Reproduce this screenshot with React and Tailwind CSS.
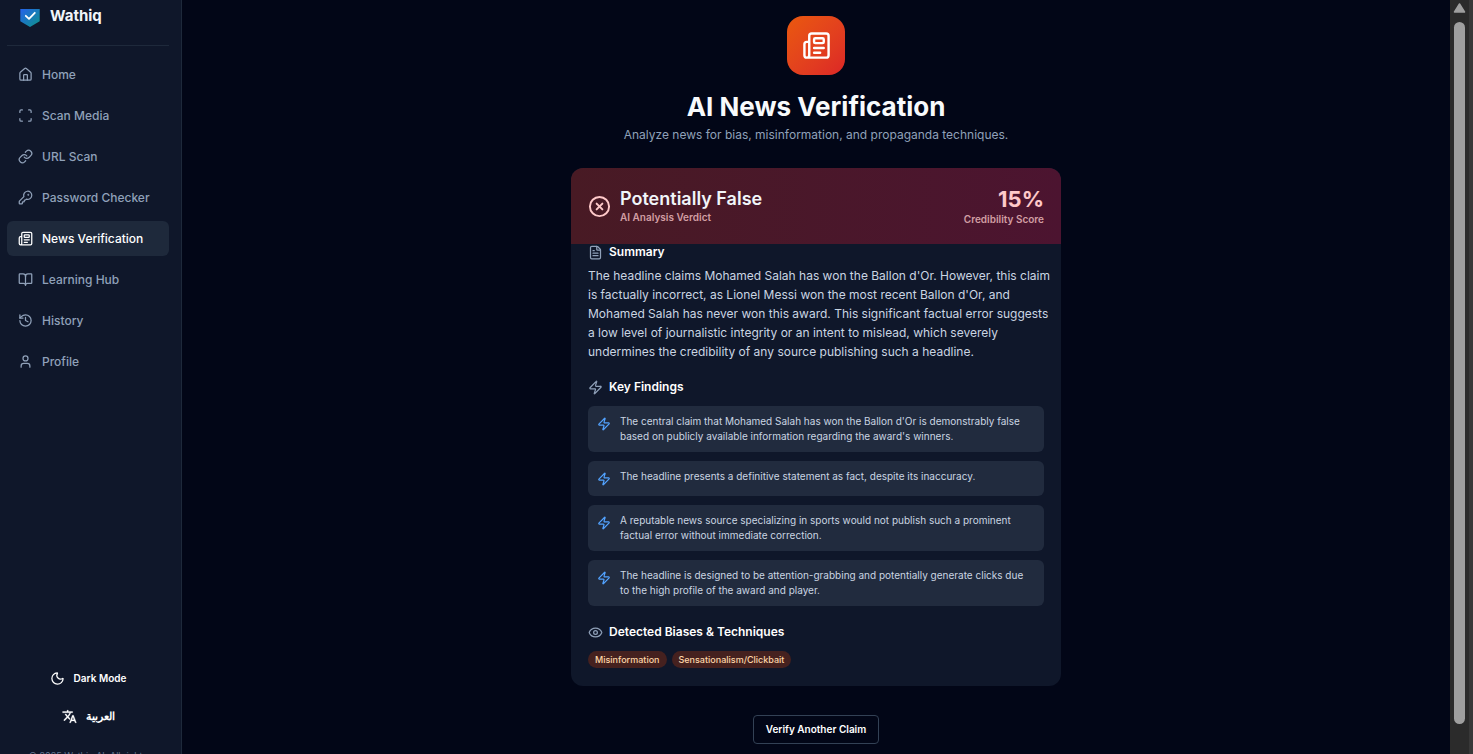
import {
  House, Scan, Link, KeyRound, Newspaper, BookOpen, History, User, Moon,
  CircleX, FileText, Zap, Eye,
} from "lucide-react";

const NAV = [
  { label: "Home", icon: House },
  { label: "Scan Media", icon: Scan },
  { label: "URL Scan", icon: Link },
  { label: "Password Checker", icon: KeyRound },
  { label: "News Verification", icon: Newspaper, active: true },
  { label: "Learning Hub", icon: BookOpen },
  { label: "History", icon: History },
  { label: "Profile", icon: User },
];

const FINDINGS = [
  "The central claim that Mohamed Salah has won the Ballon d'Or is demonstrably false based on publicly available information regarding the award's winners.",
  "The headline presents a definitive statement as fact, despite its inaccuracy.",
  "A reputable news source specializing in sports would not publish such a prominent factual error without immediate correction.",
  "The headline is designed to be attention-grabbing and potentially generate clicks due to the high profile of the award and player.",
];

const BIASES = ["Misinformation", "Sensationalism/Clickbait"];

function Logo() {
  return (
    <svg width="20" height="18" viewBox="0 0 20 18" aria-hidden="true">
      <defs>
        <linearGradient id="logo" x1="0" y1="0" x2="1" y2="1">
          <stop offset="0" stopColor="#2563eb" />
          <stop offset="1" stopColor="#0d9488" />
        </linearGradient>
      </defs>
      <path d="M0.3 0H19.7V12.2L10 18L0.3 12.2Z" fill="url(#logo)" />
      <path d="M5.8 6.8L9 9.8L14.8 3.8" fill="none" stroke="#fff" strokeWidth="1.8" strokeLinecap="round" strokeLinejoin="round" />
    </svg>
  );
}

function TranslateIcon() {
  return (
    <svg width="15" height="15" viewBox="0 0 24 24" fill="currentColor" stroke="currentColor" strokeWidth="0.5" aria-hidden="true">
      <path d="M12.87 15.07l-2.54-2.51.03-.03A17.52 17.52 0 0 0 14.07 6H17V4h-7V2H8v2H1v1.99h11.17C11.5 7.92 10.44 9.75 9 11.35 8.07 10.32 7.3 9.19 6.69 8h-2c.73 1.63 1.73 3.17 2.98 4.56l-5.09 5.02L4 19l5-5 3.11 3.11.76-2.04zM18.5 10h-2L12 22h2l1.12-3h4.75L21 22h2l-4.5-12zm-2.62 7l1.62-4.33L19.12 17h-3.24z" />
    </svg>
  );
}

function Sidebar() {
  return (
    <aside className="flex w-[182px] shrink-0 flex-col overflow-hidden border-r border-[#1e293b] bg-[#0f172a] pr-3 pl-[7px]">
      <div className="flex h-[46px] shrink-0 items-start gap-[10px] border-b border-[#1e293b] pt-[6px] pl-[13px]">
        <span className="pt-[3px]"><Logo /></span>
        <span className="text-[15px] leading-5 font-bold text-slate-100">Wathiq</span>
      </div>
      <nav className="flex flex-col gap-[6px] pt-[11px]">
        {NAV.map(({ label, icon: Icon, active }) => (
          <a
            key={label}
            href="#"
            className={
              active
                ? "flex h-[35px] items-center gap-[9px] rounded-md bg-[#1e293b] pl-[11px] text-[12px] font-medium text-white"
                : "flex h-[35px] items-center gap-[9px] rounded-md pl-[11px] text-[12px] font-medium text-slate-400"
            }
          >
            <Icon size={15} />
            {label}
          </a>
        ))}
      </nav>
      <div className="mt-auto -mb-2 flex shrink-0 flex-col items-center text-white">
        <button type="button" className="flex h-[38px] items-center gap-[9px] text-[10px] font-semibold">
          <Moon size={15} />
          Dark Mode
        </button>
        <button type="button" className="flex h-[38px] items-center gap-[9px] text-[11px] font-semibold">
          <TranslateIcon />
          <span lang="ar">العربية</span>
        </button>
        <p className="mt-[15px] text-[9px] leading-3 whitespace-nowrap text-slate-500">© 2025 Wathiq AI. All rights</p>
      </div>
    </aside>
  );
}

function SectionTitle({ icon: Icon, children }) {
  return (
    <h3 className="flex items-center gap-[6px] text-[12px] leading-4 font-semibold text-white">
      <Icon size={15} className="text-slate-400" />
      {children}
    </h3>
  );
}

function Report() {
  return (
    <section className="overflow-hidden rounded-xl bg-[#0f172a]">
      <header className="flex h-[76px] items-center justify-between bg-gradient-to-r from-[#481a24] to-[#4c1430] px-[17px]">
        <div className="flex items-center gap-[9px]">
          <CircleX size={23} className="text-red-200" />
          <div>
            <h2 className="text-[18px] leading-[22px] font-semibold text-slate-100">Potentially False</h2>
            <p className="text-[10px] leading-[14px] font-semibold text-[#d29ea3]">AI Analysis Verdict</p>
          </div>
        </div>
        <div className="text-right">
          <p className="text-[22px] leading-[26px] font-bold text-red-200">15%</p>
          <p className="text-[10px] leading-[14px] font-semibold text-[#d29ea3]">Credibility Score</p>
        </div>
      </header>
      <div className="px-[17px] pb-[18px]">
        <SectionTitle icon={FileText}>Summary</SectionTitle>
        <p className="mt-[6px] -mr-3 text-[12px] leading-[19px] text-slate-300">
          The headline claims Mohamed Salah has won the Ballon d'Or. However, this claim is factually
          incorrect, as Lionel Messi won the most recent Ballon d'Or, and Mohamed Salah has never won
          this award. This significant factual error suggests a low level of journalistic integrity or an
          intent to mislead, which severely undermines the credibility of any source publishing such a
          headline.
        </p>
        <div className="mt-[18px]">
          <SectionTitle icon={Zap}>Key Findings</SectionTitle>
        </div>
        <ul className="mt-[11px] flex flex-col gap-[9px]">
          {FINDINGS.map((text) => (
            <li key={text} className="flex min-h-[35px] gap-[9px] rounded-md bg-[#212b3e] px-[9px] py-2 text-[10px] leading-[15px] text-slate-300">
              <Zap size={14} className="mt-[3px] shrink-0 text-blue-400" />
              <span>{text}</span>
            </li>
          ))}
        </ul>
        <div className="mt-[18px]">
          <SectionTitle icon={Eye}>Detected Biases &amp; Techniques</SectionTitle>
        </div>
        <ul className="mt-[11px] flex gap-[5px]">
          {BIASES.map((bias) => (
            <li key={bias} className="rounded-full bg-[#45211f] px-[7px] text-[9px] leading-[17px] font-medium text-orange-200">{bias}</li>
          ))}
        </ul>
      </div>
    </section>
  );
}

function ScrollTrack() {
  return (
    <div className="flex w-[23px] shrink-0 border-r-4 border-[#383838] bg-[#2b2b2b]" aria-hidden="true">
      <div className="flex w-full flex-col items-center pt-[3px] pb-[30px]">
        <svg width="13" height="10" viewBox="0 0 13 10">
          <path d="M6.5 1L11.5 9H1.5Z" fill="#9f9f9f" stroke="#9f9f9f" strokeWidth="1.5" strokeLinejoin="round" />
        </svg>
        <div className="mt-[9px] w-[11px] grow rounded-full bg-[#9f9f9f]" />
      </div>
    </div>
  );
}

export default function App() {
  return (
    <div className="flex h-screen overflow-hidden bg-[#020617] font-['Inter',sans-serif]">
      <Sidebar />
      <main className="flex min-w-0 grow justify-center overflow-hidden">
        <div className="flex w-full max-w-[490px] flex-col pt-4">
          <div className="flex flex-col items-center">
            <div className="flex h-[59px] w-[58px] items-center justify-center rounded-2xl bg-gradient-to-br from-[#ea580c] to-[#dc2626] text-white">
              <Newspaper size={29} />
            </div>
            <h1 className="mt-[14px] text-[26px] leading-9 font-bold text-slate-50">AI News Verification</h1>
            <p className="text-[12px] leading-5 text-slate-400">
              Analyze news for bias, misinformation, and propaganda techniques.
            </p>
          </div>
          <div className="mt-[23px]">
            <Report />
          </div>
          <button type="button" className="mt-[29px] h-[29px] shrink-0 self-center rounded border border-[#334155] px-[12px] text-[10px] font-semibold text-white">
            Verify Another Claim
          </button>
        </div>
      </main>
      <ScrollTrack />
    </div>
  );
}
